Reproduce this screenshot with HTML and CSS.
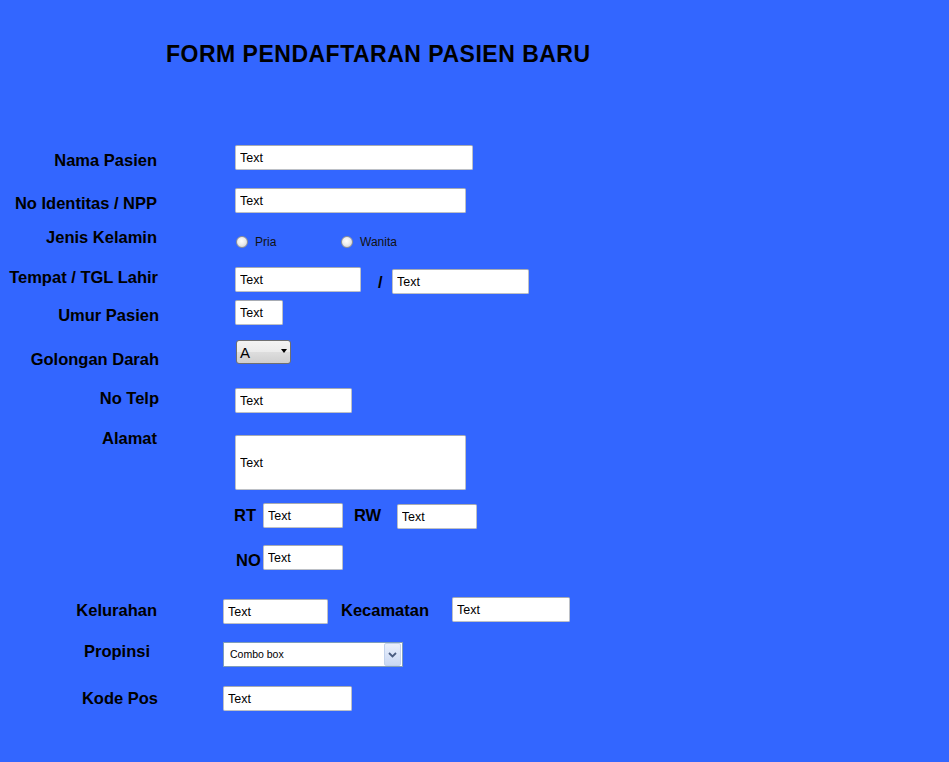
FILE: index.html
```html
<!DOCTYPE html>
<html lang="id">
<head>
<meta charset="utf-8">
<title>Form Pendaftaran Pasien Baru</title>
<link rel="stylesheet" href="styles.css">
</head>
<body>
<div class="page">
  <h1 class="title">FORM PENDAFTARAN PASIEN BARU</h1>
  <form class="form">
    <div class="row row-nama">
      <label class="lbl">Nama Pasien</label>
      <input class="field w-nama" type="text" value="Text">
    </div>
    <div class="row row-noid">
      <label class="lbl">No Identitas / NPP</label>
      <input class="field w-noid" type="text" value="Text">
    </div>
    <div class="row row-jk">
      <label class="lbl">Jenis Kelamin</label>
      <div class="radios">
        <span class="opt opt-first"><span class="radio"></span><span class="opt-text">Pria</span></span>
        <span class="opt"><span class="radio"></span><span class="opt-text">Wanita</span></span>
      </div>
    </div>
    <div class="row row-ttl">
      <label class="lbl lbl-158">Tempat / TGL Lahir</label>
      <input class="field w-tempat" type="text" value="Text">
      <span class="slash">/</span>
      <input class="field w-tgl" type="text" value="Text">
    </div>
    <div class="row row-umur">
      <label class="lbl lbl-159">Umur Pasien</label>
      <input class="field w-umur" type="text" value="Text">
    </div>
    <div class="row row-gol">
      <label class="lbl lbl-159">Golongan Darah</label>
      <div class="select"><span class="select-val">A</span><span class="select-arrow"></span></div>
    </div>
    <div class="row row-telp">
      <label class="lbl lbl-159">No Telp</label>
      <input class="field w-telp" type="text" value="Text">
    </div>
    <div class="row row-alamat">
      <label class="lbl">Alamat</label>
      <input class="field w-alamat" type="text" value="Text">
    </div>
    <div class="row row-rtrw">
      <span class="lbl-in rt">RT</span>
      <input class="field w-rt" type="text" value="Text">
      <span class="lbl-in rw">RW</span>
      <input class="field w-rw" type="text" value="Text">
    </div>
    <div class="row row-no">
      <span class="lbl-in no">NO</span>
      <input class="field w-no" type="text" value="Text">
    </div>
    <div class="row row-kel low">
      <label class="lbl">Kelurahan</label>
      <input class="field w-kel" type="text" value="Text">
      <span class="lbl-in kec">Kecamatan</span>
      <input class="field w-kec" type="text" value="Text">
    </div>
    <div class="row row-prop low">
      <label class="lbl">Propinsi</label>
      <div class="combo">
        <span class="combo-text">Combo box</span>
        <span class="combo-btn"><svg width="9" height="6" viewBox="0 0 9 6"><path d="M1 1 L4.5 4.5 L8 1" fill="none" stroke="#4a5d80" stroke-width="1.8"/></svg></span>
      </div>
    </div>
    <div class="row row-kode low">
      <label class="lbl lbl-158">Kode Pos</label>
      <input class="field w-kode" type="text" value="Text">
    </div>
  </form>
</div>
</body>
</html>
```

FILE: styles.css
```css
* { box-sizing: border-box; }
html, body { margin: 0; padding: 0; }
body {
  background: #3366ff;
  font-family: "Liberation Sans", Arial, sans-serif;
  color: #000;
}
.page {
  height: 762px;
  padding-top: 40px;
  overflow: hidden;
}
.title {
  margin: 0 0 0 166px;
  font-size: 23px;
  line-height: 28px;
  font-weight: bold;
  letter-spacing: 0.5px;
}
.form { margin-top: 77px; }

.row {
  display: flex;
  align-items: flex-start;
}
.lbl {
  flex: none;
  width: 157px;
  text-align: right;
  font-size: 16.5px;
  line-height: 18px;
  font-weight: bold;
  white-space: nowrap;
}
.lbl-158 { width: 158px; margin-right: -1px; }
.lbl-159 { width: 159px; margin-right: -2px; }
.lbl-in {
  flex: none;
  font-size: 16.5px;
  line-height: 18px;
  font-weight: bold;
  white-space: nowrap;
}

.field {
  flex: none;
  height: 25px;
  margin: 0;
  padding: 0 4px;
  border: 1px solid #bdc0c6;
  border-top-color: #a7abb2;
  border-radius: 2px;
  background: #fff;
  color: #000;
  font-family: "Liberation Sans", Arial, sans-serif;
  font-size: 12.5px;
  outline: none;
}
.row .lbl + .field,
.row .lbl + .radios,
.row .lbl + .select { margin-left: 78px; }
.row.low .lbl + .field,
.row.low .lbl + .combo { margin-left: 66px; }

/* rows */
.row-nama { height: 43px; }
.row-nama .lbl { margin-top: 6px; }
.w-nama { width: 238px; }

.row-noid { height: 40px; }
.row-noid .lbl { margin-top: 6px; }
.w-noid { width: 231px; }

.row-jk { height: 39px; }
.row-jk .lbl { margin-top: 0; }
.radios {
  display: flex;
  align-items: center;
  height: 18px;
  margin-top: 5px;
}
.row .lbl + .radios { margin-left: 79px; }
.opt { display: flex; align-items: center; }
.opt-first { width: 105px; }
.radio {
  flex: none;
  width: 12px;
  height: 12px;
  border-radius: 50%;
  border: 1px solid #8f9196;
  background: radial-gradient(circle at 45% 40%, #ffffff 0, #ededed 45%, #c6c7ca 100%);
}
.opt-text {
  margin-left: 7px;
  font-size: 12px;
  line-height: 14px;
  color: #111;
}

.row-ttl { height: 33px; }
.row-ttl .lbl { margin-top: 1px; }
.w-tempat { width: 126px; }
.slash {
  margin: 6px 0 0 17px;
  font-size: 16.5px;
  line-height: 18px;
  font-weight: bold;
}
.w-tgl { width: 137px; margin: 2px 0 0 9.4px; }

.row-umur { height: 40px; }
.row-umur .lbl { margin-top: 6px; }
.w-umur { width: 48px; }

.row-gol { height: 48px; }
.row-gol .lbl { margin-top: 10px; }
.row .lbl + .select { margin-left: 79px; }
.select {
  flex: none;
  display: flex;
  align-items: flex-start;
  justify-content: space-between;
  width: 55px;
  height: 24px;
  padding: 0 3px 0 3px;
  border: 1px solid #707070;
  border-radius: 3px;
  background: linear-gradient(#f3f3f3 0%, #ebebeb 48%, #dddddd 52%, #cfcfcf 100%);
}
.select-val {
  margin-top: 4px;
  font-size: 15px;
  line-height: 16px;
  color: #000;
}
.select-arrow {
  margin-top: 8px;
  width: 0;
  height: 0;
  border-left: 3.5px solid transparent;
  border-right: 3.5px solid transparent;
  border-top: 4px solid #000;
}

.row-telp { height: 41px; }
.row-telp .lbl { margin-top: 0.5px; }
.w-telp { width: 117px; }

.row-alamat { height: 74px; }
.row-alamat .lbl { margin-top: 0; }
.w-alamat { width: 231px; height: 55px; margin-top: 6px; }

.row-rtrw { height: 42px; padding-left: 234px; }
.rt { margin-top: 2.5px; }
.w-rt { width: 80px; margin-left: 7px; }
.rw { margin: 2.5px 0 0 11px; }
.w-rw { width: 80px; margin: 1px 0 0 15.5px; }

.row-no { height: 52px; padding-left: 236px; }
.no { margin-top: 6px; }
.w-no { width: 80px; margin-left: 2px; }

.row-kel { height: 45px; }
.row-kel .lbl { margin-top: 3.5px; }
.w-kel { width: 105px; margin-top: 2px; }
.kec { margin: 3.5px 0 0 13px; }
.w-kec { width: 118px; margin-left: 23px; }

.row-prop { height: 44px; }
.row-prop .lbl { margin-top: 0; padding-right: 7px; }
.combo {
  flex: none;
  display: flex;
  width: 180px;
  height: 25px;
  border: 1px solid #7f9db9;
  background: #fff;
}
.combo-text {
  flex: 1;
  padding-left: 6px;
  font-size: 10.5px;
  line-height: 23px;
  color: #000;
}
.combo-btn {
  flex: none;
  display: flex;
  align-items: center;
  justify-content: center;
  width: 17px;
  margin: 0 1px 0 0;
  border: 1px solid #c2d2ec;
  border-radius: 2px;
  background: linear-gradient(#eaf0fc, #c9d8f3);
}

.row-kode { height: 25px; }
.row-kode .lbl { margin-top: 3px; }
.w-kode { width: 129px; }
```
